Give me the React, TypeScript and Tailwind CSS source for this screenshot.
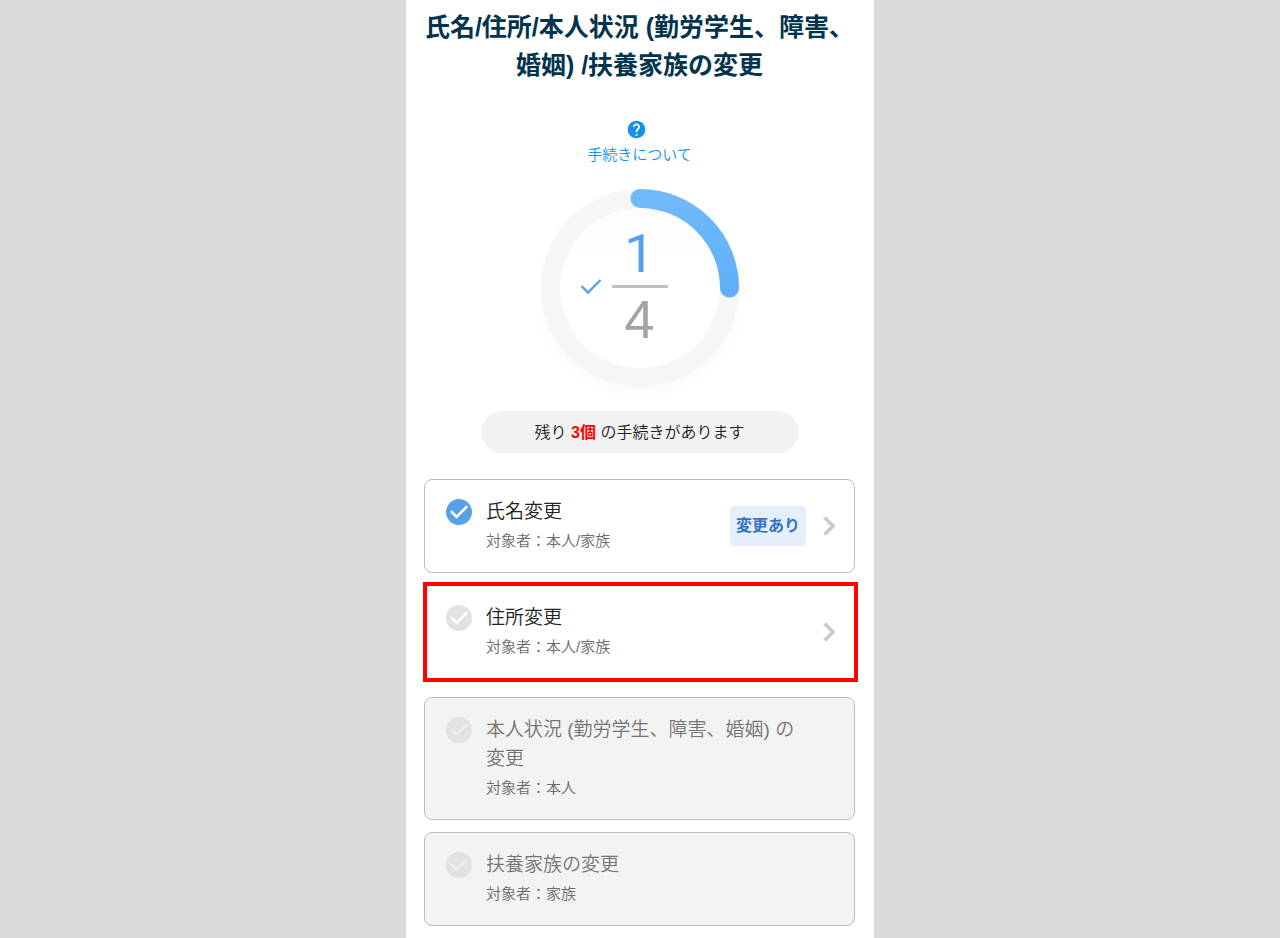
import React from "react";
import clsx from "clsx";
import { MdHelp } from "react-icons/md";

type Procedure = {
  id: string;
  title: string;
  target: string;
  done?: boolean;
  changed?: boolean;
  disabled?: boolean;
  highlighted?: boolean;
};

const procedures: Procedure[] = [
  {
    id: "name",
    title: "氏名変更",
    target: "本人/家族",
    done: true,
    changed: true,
  },
  {
    id: "address",
    title: "住所変更",
    target: "本人/家族",
    highlighted: true,
  },
  {
    id: "status",
    title: "本人状況 (勤労学生、障害、婚姻) の変更",
    target: "本人",
    disabled: true,
  },
  {
    id: "dependents",
    title: "扶養家族の変更",
    target: "家族",
    disabled: true,
  },
];

function StatusIcon({ done, disabled }: { done?: boolean; disabled?: boolean }) {
  return (
    <svg viewBox="0 0 26 26" className="mt-0.5 h-[26px] w-[26px] shrink-0">
      <circle cx="13" cy="13" r="13" fill={done ? "#56a2e8" : "#e2e2e2"} />
      <path
        d="M5.8 13L10.6 17.8L20.4 8"
        fill="none"
        stroke={disabled ? "#f0f0f0" : "#ffffff"}
        strokeWidth={disabled ? "2" : "2.6"}
        strokeLinecap="round"
      />
    </svg>
  );
}

function Chevron() {
  return (
    <svg viewBox="0 0 13 20" className="h-5 w-[13px]">
      <path d="M1.6 1.6L10 10L1.6 18.4" fill="none" stroke="#cbcbcb" strokeWidth="3.6" />
    </svg>
  );
}

function ProgressRing({ current, total }: { current: number; total: number }) {
  return (
    <div className="grid h-[198px] w-[198px] place-items-center rounded-full shadow-[0_6px_14px_rgba(0,0,0,0.025)]">
      <svg viewBox="0 0 198 198" className="col-start-1 row-start-1 h-full w-full">
        <defs>
          <linearGradient id="progress" x1="0" y1="0" x2="0" y2="1">
            <stop offset="0" stopColor="#70b9fa" />
            <stop offset="1" stopColor="#60b0f8" />
          </linearGradient>
          <linearGradient id="inner" x1="0" y1="0" x2="0" y2="1">
            <stop offset="0" stopColor="#fbfbfb" />
            <stop offset="0.35" stopColor="#ffffff" />
          </linearGradient>
        </defs>
        <circle cx="99" cy="99" r="89.5" fill="url(#inner)" stroke="#f6f6f6" strokeWidth="19" />
        <path
          d="M99 9.5A89.5 89.5 0 0 1 188.5 99"
          fill="none"
          stroke="url(#progress)"
          strokeWidth="19"
          strokeLinecap="round"
        />
      </svg>
      <div className="col-start-1 row-start-1 grid grid-cols-[22px_56px_22px] items-center gap-[10px] pb-[3px]">
        <svg viewBox="0 0 22 16" className="h-4 w-[22px]">
          <path d="M1.5 7L8 13.5L20.5 1" fill="none" stroke="#56a2e8" strokeWidth="2.4" />
        </svg>
        <div className="text-center text-[54px] leading-[62px] font-normal">
          <p className="font-[Roboto] text-[#56a2e8]">{current}</p>
          <p className="border-t-[3px] border-[#bfbfbf] text-[#a3a3a3]">{total}</p>
        </div>
      </div>
    </div>
  );
}

function ProcedureCard({ item }: { item: Procedure }) {
  return (
    <button
      type="button"
      disabled={item.disabled}
      className={clsx(
        "flex items-center gap-[17px] py-[17px] pr-[17px] text-left",
        item.highlighted
          ? "-mt-[3px] -mr-[3px] mb-[3px] -ml-px border-4 border-[#ff0000] pl-[19px]"
          : "rounded-lg border border-[#bdbdbd] pl-[21px]",
        item.disabled ? "bg-[#f3f3f3]" : "bg-white",
      )}
    >
      <span className="flex flex-1 items-start gap-[14px]">
        <StatusIcon done={item.done} disabled={item.disabled} />
        <span className="flex-1 leading-[29px]">
          <span
            className={clsx(
              "block text-[19px]",
              item.disabled ? "text-[#757575]" : "text-[#222222]",
            )}
          >
            {item.title}
          </span>
          <span className="block text-[15px] text-[#6c6c6c]">対象者：{item.target}</span>
        </span>
        {item.changed && (
          <span className="flex h-10 w-[76px] items-center justify-center self-center rounded bg-[#e5effc] text-base font-bold text-[#3572c6]">
            変更あり
          </span>
        )}
      </span>
      <span className="w-[14px]">{!item.disabled && <Chevron />}</span>
    </button>
  );
}

export default function App() {
  return (
    <div
      lang="ja"
      className="min-h-screen bg-[#d9d9d9] font-['Liberation_Sans','Noto_Sans_CJK_JP',sans-serif] font-[350]"
    >
      <main className="mx-auto flex min-h-screen w-full max-w-[468px] flex-col items-center bg-white pt-2 pr-[19px] pb-3 pl-[18px]">
        <h1 className="text-center text-[25px] leading-[38px] font-bold text-[#03344d]">
          氏名/住所/本人状況 (勤労学生、障害、婚姻) /扶養家族の変更
        </h1>
        <a
          href="#about"
          className="mt-[35px] flex flex-col items-center text-[15px] leading-6 text-[#1791ea]"
        >
          <MdHelp className="mr-1.5 mb-[3px] h-[21px] w-[21px]" />
          手続きについて
        </a>
        <div className="mt-[22px]">
          <ProgressRing current={1} total={4} />
        </div>
        <p className="mt-6 flex h-[42px] w-[318px] items-center justify-center rounded-full bg-[#f2f2f2] pt-0.5 text-base text-[#222222]">
          <span>
            残り <strong className="font-bold text-[#ff0000]">3個</strong> の手続きがあります
          </span>
        </p>
        <div className="mt-[26px] flex flex-col gap-3 self-stretch">
          {procedures.map((item) => (
            <ProcedureCard key={item.id} item={item} />
          ))}
        </div>
      </main>
    </div>
  );
}
